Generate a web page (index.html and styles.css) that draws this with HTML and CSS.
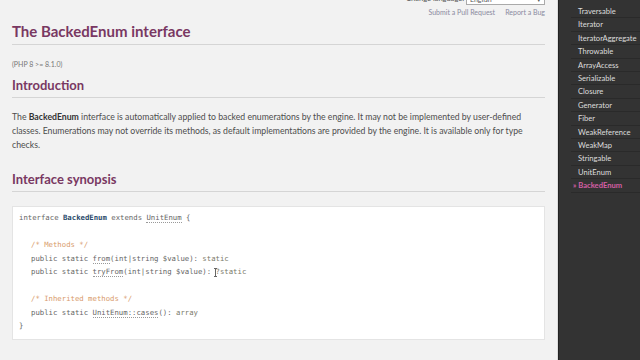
FILE: index.html
```html
<!DOCTYPE html>
<html>
<head>
    <title>PHP: BackedEnum - Manual</title>
    <link rel="stylesheet" href="styles.css">
</head>
<body>

<div class="layout">
    <div class="page">
        <div class="topbar">
            <div class="lang">Change language: <span class="select">English<span class="caret">&#9662;</span></span></div>
            <div class="edit-links">
                <a href="#">Submit a Pull Request</a>
                <a href="#">Report a Bug</a>
            </div>
        </div>

        <h1>The BackedEnum interface</h1>
        <p class="verinfo">(PHP 8 &gt;= 8.1.0)</p>

        <h2>Introduction</h2>
        <p class="para">The <b>BackedEnum</b> interface is automatically applied to backed enumerations by the engine. It may not be implemented by user-defined classes. Enumerations may not override its methods, as default implementations are provided by the engine. It is available only for type checks.</p>

        <h2 class="synopsis-title">Interface synopsis</h2>
        <div class="synopsis">
            <div class="line"><span class="kw">interface</span> <b class="cls">BackedEnum</b> <span class="kw">extends</span> <a class="link" href="#">UnitEnum</a> {</div>
            <div class="line">&nbsp;</div>
            <div class="line ind"><span class="comment">/* Methods */</span></div>
            <div class="line ind">public static <a class="link" href="#">from</a>(int|string $value): <span class="type">static</span></div>
            <div class="line ind">public static <a class="link" href="#">tryFrom</a>(int|string $value): <span class="type cursor-host"><span class="cursor"></span>?static</span></div>
            <div class="line">&nbsp;</div>
            <div class="line ind"><span class="comment">/* Inherited methods */</span></div>
            <div class="line ind">public static <a class="link" href="#">UnitEnum::cases</a>(): <span class="type">array</span></div>
            <div class="line">}</div>
        </div>
    </div>

    <div class="sidebar">
        <ul class="toc">
            <li><a href="#">Traversable</a></li>
            <li><a href="#">Iterator</a></li>
            <li><a href="#">IteratorAggregate</a></li>
            <li><a href="#">Throwable</a></li>
            <li><a href="#">ArrayAccess</a></li>
            <li><a href="#">Serializable</a></li>
            <li><a href="#">Closure</a></li>
            <li><a href="#">Generator</a></li>
            <li><a href="#">Fiber</a></li>
            <li><a href="#">WeakReference</a></li>
            <li><a href="#">WeakMap</a></li>
            <li><a href="#">Stringable</a></li>
            <li><a href="#">UnitEnum</a></li>
            <li class="current"><a href="#">&raquo; BackedEnum</a></li>
        </ul>
    </div>
</div>

</body>
</html>
```

FILE: styles.css
```css
html, body {
    margin: 0;
    height: 100%;
}
body {
    background-color: #f2f2f2;
    font-family: "Lato", "Open Sans", sans-serif;
    color: #4a4a4a;
    overflow: hidden;
}
a {
    text-decoration: none;
    color: inherit;
}
.layout {
    display: flex;
    height: 360px;
}
.page {
    flex: none;
    width: 533px;
    padding: 0 12px 0 12px;
    border-right: 1px solid #dcdcdc;
}
.topbar {
    display: flex;
    flex-direction: column;
    align-items: flex-end;
    margin-top: -7px;
    font-size: 7px;
    color: #888;
}
.lang {
    height: 12px;
    line-height: 12px;
    color: #555;
    font-size: 7.5px;
}
.select {
    display: inline-block;
    width: 74px;
    height: 9px;
    border: 1px solid #aaa;
    background: #fff;
    font-size: 7px;
    line-height: 9px;
    padding-left: 3px;
    position: relative;
    vertical-align: middle;
}
.caret {
    position: absolute;
    right: 3px;
    top: 0;
}
.edit-links {
    display: flex;
    gap: 10px;
    line-height: 14px;
    color: #8a8aa0;
}
h1 {
    margin: 2px 0 0 0;
    font-size: 15px;
    font-weight: bold;
    color: #793862;
    line-height: 20px;
    padding-bottom: 3px;
    border-bottom: 1px solid #d5d5d5;
}
.verinfo {
    margin: 15px 0 0 0;
    font-size: 7px;
    color: #777;
}
h2 {
    margin: 8px 0 0 0;
    font-size: 13px;
    font-weight: bold;
    color: #793862;
    line-height: 18px;
    padding-bottom: 3px;
    border-bottom: 1px solid #d5d5d5;
}
.para {
    margin: 12px 0 0 0;
    max-width: 520px;
    font-size: 8.7px;
    line-height: 14px;
    color: #4d4d4d;
}
.para b {
    color: #333;
}
.synopsis-title {
    margin-top: 18px;
}
.synopsis {
    margin-top: 14px;
    background: #fff;
    border: 1px solid #e4e4e4;
    padding: 4px 6px 6px 6px;
    font-family: "DejaVu Sans Mono", monospace;
    font-size: 7.3px;
    color: #666;
}
.line {
    line-height: 13.5px;
    white-space: pre;
}
.ind {
    padding-left: 12px;
}
.cls {
    color: #2a4a6b;
}
.link {
    border-bottom: 1px dotted #999;
}
.comment {
    color: #d89a6a;
}
.type {
    color: #7a7a6a;
}
.cursor-host {
    position: relative;
}
.cursor {
    position: absolute;
    left: -2px;
    top: 1px;
    width: 3px;
    height: 9px;
    border-top: 1px solid #666;
    border-bottom: 1px solid #666;
    box-sizing: border-box;
    background: linear-gradient(#666, #666) center / 1px 100% no-repeat;
}
.sidebar {
    flex: 1;
    background-color: #333;
    border-left: 1px solid #222;
}
.toc {
    list-style: none;
    margin: 5px 0 0 12px;
    padding: 0;
    font-size: 7.6px;
}
.toc li {
    line-height: 12.4px;
    border-bottom: 1px solid #2a2a2a;
    padding-left: 7px;
    color: #ddd;
}
.toc li.current {
    color: #d35fa5;
    padding-left: 2px;
    font-weight: bold;
}
```
